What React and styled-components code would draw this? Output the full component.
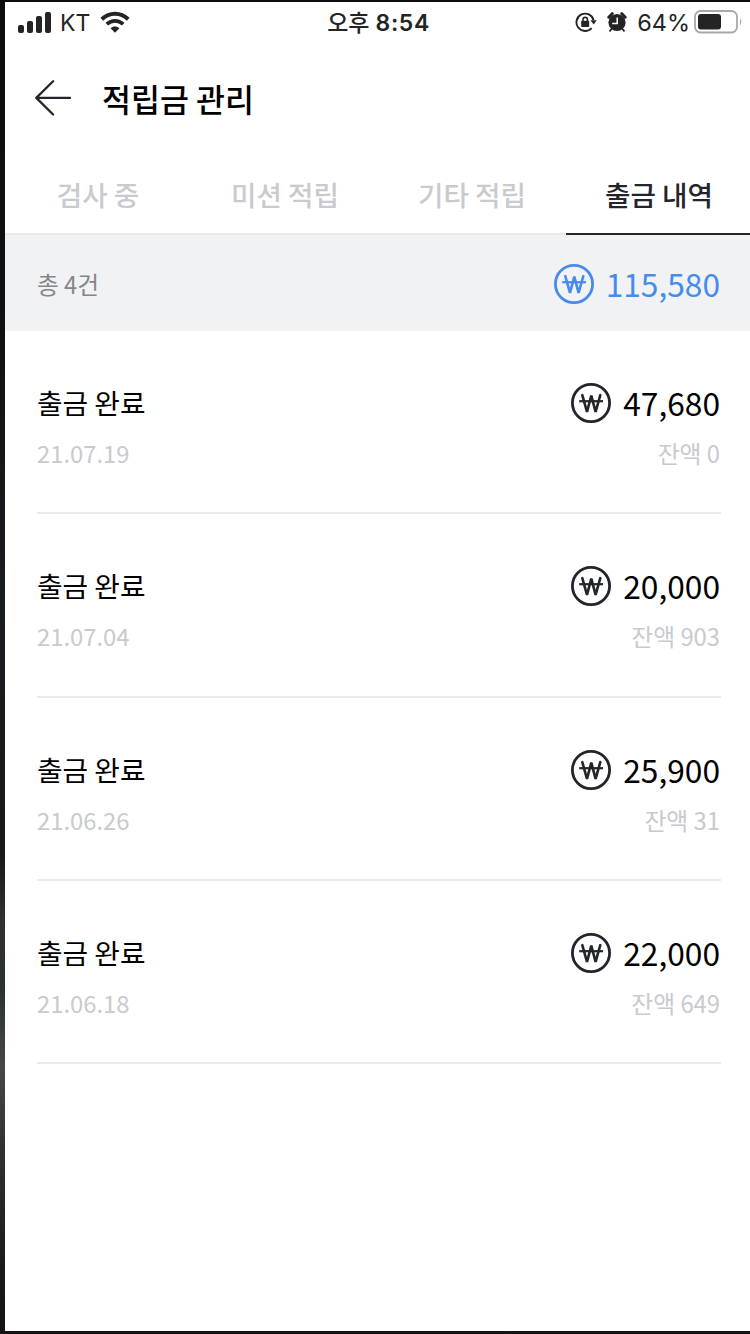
import React from 'react';
import styled, { createGlobalStyle } from 'styled-components';

const tabs = ['검사 중', '미션 적립', '기타 적립', '출금 내역'];

const history = [
    { date: '21.07.19', amount: '47,680', balance: '0' },
    { date: '21.07.04', amount: '20,000', balance: '903' },
    { date: '21.06.26', amount: '25,900', balance: '31' },
    { date: '21.06.18', amount: '22,000', balance: '649' },
];

const WonIcon = () => (
    <svg width="40" height="40" viewBox="0 0 40 40" fill="none" stroke="currentColor">
        <circle cx="20" cy="20" r="18.6" strokeWidth="2.8" />
        <path d="M11.3 12.2L16 28.8L20.3 12.6L24.6 28.8L29.3 12.2" strokeWidth="2.6" strokeLinecap="round" strokeLinejoin="bevel" />
        <path d="M8.2 18.2H32" strokeWidth="2.2" />
    </svg>
);

const SignalIcon = () => (
    <svg width="34" height="22" viewBox="0 0 34 22" fill="#242424">
        <rect x="0" y="14" width="6" height="8" rx="2" />
        <rect x="9" y="10" width="6" height="12" rx="2" />
        <rect x="18" y="5" width="6" height="17" rx="2" />
        <rect x="27" y="1" width="6" height="21" rx="2" />
    </svg>
);

const WifiIcon = () => (
    <svg width="30" height="22" viewBox="0 0 30 22">
        <path d="M1.8 8.2C9.3 .9 20.7 .9 28.2 8.2" fill="none" stroke="#242424" strokeWidth="4" />
        <path d="M6.8 13.2C11.5 8.7 18.5 8.7 23.2 13.2" fill="none" stroke="#242424" strokeWidth="3.8" />
        <path d="M10.6 17.3C13.1 15 16.9 15 19.4 17.3L15 21.7Z" fill="#242424" />
    </svg>
);

const RotationLockIcon = () => (
    <svg width="22" height="22" viewBox="0 0 22 22">
        <path d="M16.6 17.2A8.7 8.7 0 1 1 18.6 9.2" fill="none" stroke="#242424" strokeWidth="1.9" />
        <path d="M15.4 9.2H21.8L18.7 13.6Z" fill="#242424" />
        <rect x="6.2" y="9.8" width="8" height="6.2" rx=".8" fill="#242424" />
        <path d="M8 10V8.6A2.2 2.2 0 0 1 12.4 8.6V10" fill="none" stroke="#242424" strokeWidth="1.6" />
    </svg>
);

const AlarmIcon = () => (
    <svg width="20" height="20" viewBox="0 0 20 20">
        <path d="M1.8 5.2L5.2 1.7M18.2 5.2L14.8 1.7" stroke="#242424" strokeWidth="3" strokeLinecap="round" />
        <path d="M3 18.8L5 16.5M17 18.8L15 16.5" stroke="#242424" strokeWidth="1.8" strokeLinecap="round" />
        <circle cx="10" cy="10.5" r="8.6" fill="#242424" />
        <path d="M10.2 5.5V11.4H5.2" fill="none" stroke="#fff" strokeWidth="1.5" />
    </svg>
);

const BatteryIcon = () => (
    <svg width="48" height="24" viewBox="0 0 48 24">
        <rect x="1" y="1" width="42" height="21.5" rx="5.5" fill="#fff" stroke="#a8a8a8" strokeWidth="1.8" />
        <rect x="4" y="4" width="23" height="15.5" rx="3" fill="#242424" />
        <path d="M46 8.5C47.7 9.5 47.7 14.3 46 15.3Z" fill="#a8a8a8" />
    </svg>
);

const BackIcon = () => (
    <svg width="37" height="38" viewBox="0 0 37 38" fill="none" stroke="#22252c" strokeWidth="2.3" strokeLinecap="round" strokeLinejoin="round">
        <path d="M18.1 2.2L1.3 18.9L18.1 35.5M1.3 18.9H35" />
    </svg>
);

const App = () => {
    return (
        <Frame>
            <GlobalStyle />
            <Screen>
                <StatusBar>
                    <StatusLeft>
                        <SignalIcon />
                        <Carrier>KT</Carrier>
                        <WifiIcon />
                    </StatusLeft>
                    <Time>오후 <Clock>8:54</Clock></Time>
                    <StatusRight>
                        <RotationLockIcon />
                        <AlarmIcon />
                        <Percent>64%</Percent>
                        <BatteryIcon />
                    </StatusRight>
                </StatusBar>
                <Header>
                    <BackIcon />
                    <Title>적립금 관리</Title>
                </Header>
                <Tabs>
                    {tabs.map((tab, index) => (
                        <Tab key={tab} $active={index === 3}>{tab}</Tab>
                    ))}
                </Tabs>
                <Summary>
                    <Count>총 4건</Count>
                    <Amount $color="#468bee">
                        <WonIcon />
                        <AmountValue>115,580</AmountValue>
                    </Amount>
                </Summary>
                <List>
                    {history.map((item) => (
                        <Item key={item.date}>
                            <ItemLine>
                                <Status>출금 완료</Status>
                                <Amount $color="#22252c">
                                    <WonIcon />
                                    <AmountValue $color="#000">{item.amount}</AmountValue>
                                </Amount>
                            </ItemLine>
                            <ItemLine>
                                <Sub>{item.date}</Sub>
                                <Sub>잔액 {item.balance}</Sub>
                            </ItemLine>
                        </Item>
                    ))}
                </List>
            </Screen>
        </Frame>
    );
};

const GlobalStyle = createGlobalStyle`
  * {
    box-sizing: border-box;
  }

  body {
    margin: 0;
    font-family: 'Noto Sans CJK KR', sans-serif;
  }

  svg {
    display: block;
    flex-shrink: 0;
  }
`;

const Frame = styled.div`
  width: 750px;
  height: 1334px;
  padding: 2px 0 3px 5px;
  overflow: hidden;
  background: linear-gradient(#0d0d0e 0%, #101113 25%, #1a1d20 45%, #17181a 64%, #303030 69%, #2b3132 74%, #454845 80%, #303131 86%, #1a1a1b 95%, #151214 100%);
`;

const Screen = styled.div`
  height: 1329px;
  overflow: hidden;
  background-color: #FFFFFF;
`;

const StatusBar = styled.div`
  display: grid;
  grid-template-columns: 1fr auto 1fr;
  align-items: center;
  height: 40px;
  padding: 0 8px 0 13px;
  color: #242424;
  font-family: Inter, 'Noto Sans CJK KR', sans-serif;
  font-size: 24px;
`;

const StatusLeft = styled.div`
  display: flex;
  align-items: center;
`;

const StatusRight = styled.div`
  display: flex;
  align-items: center;
  justify-content: flex-end;
  gap: 10px;
`;

const Carrier = styled.span`
  margin: 2px 10px 0 8px;
  line-height: 30px;
  font-size: 23px;
`;

const Time = styled.span`
  margin: 2px 3px 0 0;
  line-height: 30px;
  font-size: 23px;
  font-weight: 500;
`;

const Clock = styled.span`
  font-weight: 600;
  letter-spacing: 0.6px;
`;

const Percent = styled.span`
  margin: 2px -6px 0 0;
  line-height: 30px;
  font-size: 23.5px;
`;

const Header = styled.div`
  display: flex;
  align-items: center;
  height: 112px;
  padding-left: 30px;
`;

const Title = styled.h1`
  margin: 0 0 1px 30px;
  font-size: 31.5px;
  font-weight: 500;
  line-height: 46px;
  color: #000;
`;

const Tabs = styled.div`
  display: flex;
  width: 748px;
`;

const Tab = styled.div`
  width: 187px;
  height: 81px;
  padding: 20px 1px 0 0;
  text-align: center;
  font-size: 27.7px;
  font-weight: 500;
  line-height: 40px;
  color: ${({ $active }) => ($active ? '#22252c' : '#c9cacf')};
  border-bottom: 2px solid ${({ $active }) => ($active ? '#22252c' : '#e9e9ea')};
`;

const Summary = styled.div`
  display: flex;
  align-items: center;
  justify-content: space-between;
  height: 96px;
  padding: 1px 30px 0 32px;
  background-color: #f1f2f4;
`;

const Count = styled.span`
  font-size: 23.7px;
  color: #85868a;
`;

const Amount = styled.div`
  display: flex;
  align-items: center;
  gap: 12px;
  color: ${({ $color }) => $color};
`;

const AmountValue = styled.span`
  margin-bottom: 2px;
  font-size: 31.7px;
  line-height: 42px;
  color: ${({ $color }) => $color || 'inherit'};
`;

const List = styled.div`
  padding: 0 29px 0 32px;
`;

const Item = styled.div`
  height: 183.33px;
  padding-top: 50px;
  border-bottom: 2px solid #ebebec;
`;

const ItemLine = styled.div`
  display: flex;
  align-items: center;
  justify-content: space-between;
  padding-right: 1px;
`;

const Status = styled.span`
  margin-bottom: 2px;
  font-size: 27.8px;
  line-height: 42px;
  color: #000;
`;

const Sub = styled.span`
  margin-top: 10px;
  font-size: 23.8px;
  line-height: 36px;
  color: #c9cacf;
`;

export default App;
